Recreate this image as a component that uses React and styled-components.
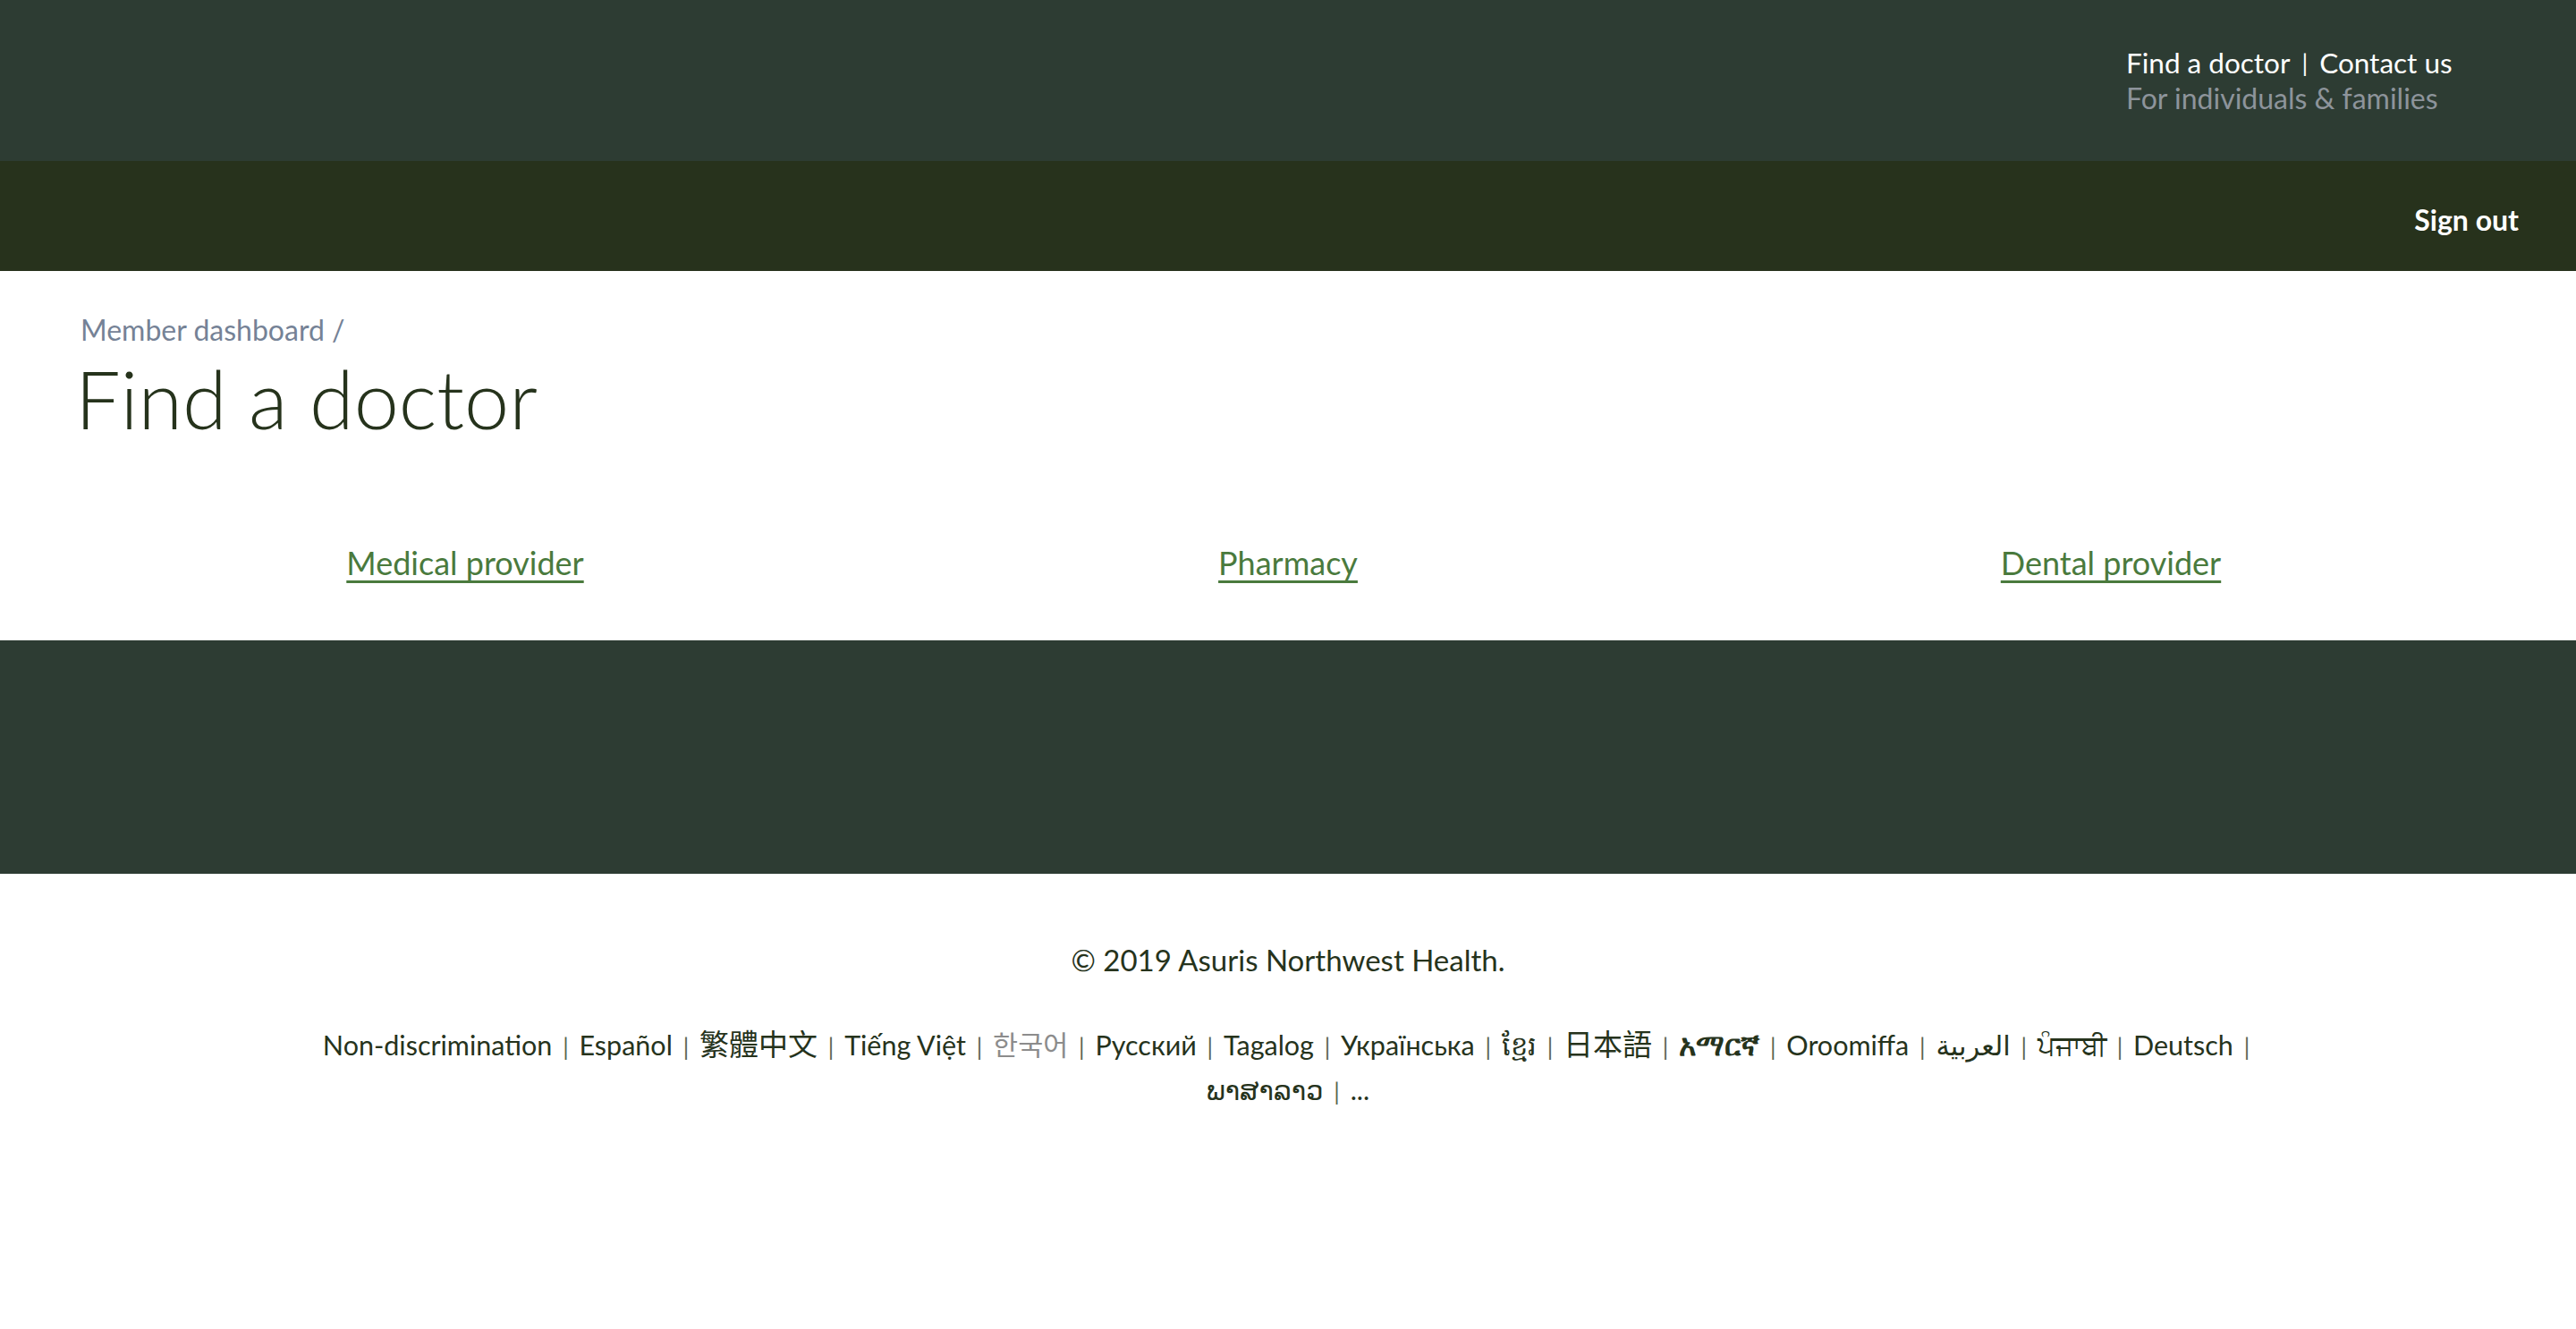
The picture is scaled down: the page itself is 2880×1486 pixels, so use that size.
import React from "react";
import styled, { createGlobalStyle } from "styled-components";

const languages = [
  { label: "Non-discrimination" },
  { label: "Español" },
  { label: "繁體中文", big: true },
  { label: "Tiếng Việt" },
  { label: "한국어", faint: true },
  { label: "Русский" },
  { label: "Tagalog" },
  { label: "Українська" },
  { label: "ខ្មែរ" },
  { label: "日本語", big: true },
  { label: "አማርኛ", big: true, bold: true },
  { label: "Oroomiffa" },
  { label: "العربية" },
  { label: "ਪੰਜਾਬੀ" },
  { label: "Deutsch" },
  { label: "ພາສາລາວ" },
];

export default function App() {
  return (
    <>
      <GlobalStyle />
      <Page>
        <TopHeader>
          <Utility>
            <UtilityLinks>
              <a href="#">Find a doctor</a>
              <Sep>|</Sep>
              <a href="#">Contact us</a>
            </UtilityLinks>
            <Audience>For individuals &amp; families</Audience>
          </Utility>
        </TopHeader>
        <NavBar>
          <SignOut href="#">Sign out</SignOut>
        </NavBar>
        <Main>
          <Breadcrumb>
            <a href="#">Member dashboard</a> /
          </Breadcrumb>
          <Title>Find a doctor</Title>
          <Options>
            <Option>
              <a href="#">Medical provider</a>
            </Option>
            <Option>
              <a href="#">Pharmacy</a>
            </Option>
            <Option>
              <a href="#">Dental provider</a>
            </Option>
          </Options>
        </Main>
        <Band />
        <Footer>
          <Copyright>© 2019 Asuris Northwest Health.</Copyright>
          <Languages>
            {languages.map((l) => (
              <React.Fragment key={l.label}>
                <Lang href="#" $big={l.big} $faint={l.faint} $bold={l.bold}>
                  {l.label}
                </Lang>{" "}
                <LangSep>|</LangSep>{" "}
              </React.Fragment>
            ))}
            <Lang href="#">...</Lang>
          </Languages>
        </Footer>
      </Page>
    </>
  );
}

const GlobalStyle = createGlobalStyle`
  body {
    margin: 0;
    background: #fff;
    font-family: Lato, "Noto Sans", "DejaVu Sans", "Noto Sans CJK TC", sans-serif;
    color: #26331c;
  }
  a {
    color: inherit;
    text-decoration: none;
  }
`;

const Page = styled.div`
  min-height: 1486px;
`;

const TopHeader = styled.header`
  height: 180px;
  box-sizing: border-box;
  background-color: #2d3c33;
  display: flex;
  justify-content: flex-end;
  padding: 50px 141px 0 0;
`;

const Utility = styled.div`
  width: 362px;
  font-size: 31.5px;
  line-height: 40px;
  white-space: nowrap;
`;

const UtilityLinks = styled.div`
  color: #ffffff;
  display: flex;
  align-items: center;
`;

const Sep = styled.span`
  margin: 0 13px;
  font-size: 27px;
`;

const Audience = styled.div`
  color: #8d949b;
  font-size: 32px;
`;

const NavBar = styled.nav`
  height: 123px;
  box-sizing: border-box;
  background-color: #27321c;
  display: flex;
  justify-content: flex-end;
  align-items: center;
  padding: 8px 64px 0 0;
`;

const SignOut = styled.a`
  color: #ffffff;
  font-size: 32px;
  font-weight: 700;
`;

const Main = styled.main`
  height: 413px;
  box-sizing: border-box;
  padding: 46px 60px 0;
`;

const Breadcrumb = styled.div`
  padding-left: 30px;
  font-size: 32px;
  line-height: 40px;
  color: #758296;
`;

const Title = styled.h1`
  margin: 0;
  padding-left: 24px;
  font-size: 90px;
  font-weight: 300;
  line-height: 112px;
  color: #26331c;
`;

const Options = styled.div`
  display: grid;
  grid-template-columns: repeat(3, 1fr);
  margin-top: 106px;
`;

const Option = styled.div`
  text-align: center;
  font-size: 36px;
  line-height: 44px;
  a {
    color: #4a7a3d;
    text-decoration: underline;
    text-decoration-thickness: 3px;
    text-underline-offset: 6px;
  }
`;

const Band = styled.div`
  height: 261px;
  background-color: #2d3c33;
`;

const Footer = styled.footer`
  padding-top: 73px;
  display: flex;
  flex-direction: column;
  align-items: center;
`;

const Copyright = styled.p`
  margin: 0;
  font-size: 33px;
  line-height: 46px;
  color: #26331c;
`;

const Languages = styled.div`
  max-width: 2200px;
  margin-top: 47px;
  text-align: center;
  font-size: 30.5px;
  line-height: 48px;
  color: #26331c;
`;

const Lang = styled.a`
  white-space: nowrap;
  font-size: ${(p) => (p.$big ? "33px" : "30.5px")};
  font-weight: ${(p) => (p.$bold ? 700 : 400)};
  color: ${(p) => (p.$faint ? "#8c8c8c" : "#26331c")};
`;

const LangSep = styled.span`
  margin: 0 4px;
  font-size: 26px;
  color: #5a6450;
`;
